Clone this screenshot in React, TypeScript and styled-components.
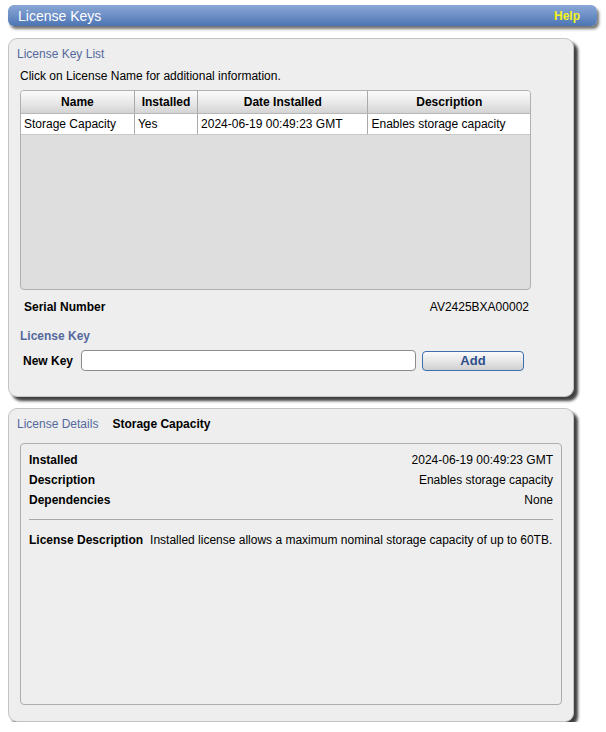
import React from 'react';
import styled, { createGlobalStyle } from 'styled-components';

const Global = createGlobalStyle`
  html, body {
    margin: 0;
    padding: 0;
    background: #ffffff;
    font-family: "Liberation Sans", Arial, sans-serif;
    font-size: 12px;
    color: #000;
  }
`;

const Page = styled.div`
  display: flex;
  flex-direction: column;
  padding: 5px 0 0 8px;
  width: 589px;
`;

const TitleBar = styled.div`
  display: flex;
  align-items: center;
  justify-content: space-between;
  height: 21px;
  padding: 0 17px 0 10px;
  border-radius: 6px;
  background: linear-gradient(to bottom, #8aa8d6 0%, #6d8fc6 50%, #4b74b3 100%);
  box-shadow: 2px 3px 3px rgba(0, 0, 0, 0.55);
  color: #fff;
  font-size: 14px;
`;

const HelpLink = styled.span`
  color: #f2f21a;
  font-size: 12px;
  font-weight: bold;
`;

const Panel = styled.div<{ $height: number; $top: number }>`
  box-sizing: border-box;
  display: flex;
  flex-direction: column;
  width: 566px;
  height: ${p => p.$height}px;
  margin-top: ${p => p.$top}px;
  padding: 7px 0 0 0;
  background: #eeeeee;
  border: 1px solid #c4c4c4;
  border-radius: 9px;
  box-shadow: 4px 4px 3px rgba(0, 0, 0, 0.75);
`;

const PanelTitle = styled.div`
  display: flex;
  gap: 14px;
  padding-left: 8px;
  line-height: 16px;
  color: #55699c;
`;

const Strong = styled.span`
  color: #000;
  font-weight: bold;
`;

const Body = styled.div`
  display: flex;
  flex-direction: column;
  padding-left: 11px;
`;

const Hint = styled.div`
  margin-top: 6px;
  line-height: 16px;
`;

const TableBox = styled.div`
  box-sizing: border-box;
  margin-top: 6px;
  width: 511px;
  height: 200px;
  background: #dedede;
  border: 1px solid #b0b0b0;
  border-radius: 4px;
  overflow: hidden;
`;

const Table = styled.table`
  width: 100%;
  border-collapse: collapse;
  font-size: 12px;
`;

const Th = styled.th<{ $w: number }>`
  width: ${p => p.$w}px;
  height: 22px;
  padding: 0;
  font-weight: bold;
  text-align: center;
  background: linear-gradient(to bottom, #fafafa 0%, #e6e6e6 60%, #d3d3d3 100%);
  border-left: 1px solid #aaaaaa;
  border-bottom: 1px solid #b8b8b8;
  &:first-child { border-left: none; }
`;

const Td = styled.td`
  height: 20px;
  padding: 0 0 0 3px;
  background: #fff;
  border-left: 1px solid #aaaaaa;
  border-bottom: 1px solid #c8c8c8;
  white-space: nowrap;
  &:first-child { border-left: none; }
`;

const InfoRow = styled.div<{ $top: number }>`
  display: flex;
  justify-content: space-between;
  width: 505px;
  margin-top: ${p => p.$top}px;
  padding: 0 2px 0 4px;
  line-height: 16px;
`;

const SubTitle = styled.div`
  margin-top: 13px;
  line-height: 16px;
  color: #55699c;
  font-weight: bold;
`;

const KeyRow = styled.div`
  display: flex;
  align-items: center;
  margin-top: 6px;
  padding-left: 3px;
`;

const Label = styled.span`
  font-weight: bold;
  width: 58px;
`;

const KeyInput = styled.input`
  box-sizing: border-box;
  width: 335px;
  height: 21px;
  border: 1px solid #8c8c8c;
  border-radius: 4px;
  background: #fff;
  padding: 0 4px;
  font-family: inherit;
`;

const AddButton = styled.button`
  box-sizing: border-box;
  width: 102px;
  height: 20px;
  margin-left: 6px;
  border: 1px solid #3e6db0;
  border-radius: 4px;
  background: linear-gradient(to bottom, #fbfbfb 0%, #e4e4e4 55%, #cfcfcf 100%);
  color: #2f4f8c;
  font-family: inherit;
  font-size: 13px;
  font-weight: bold;
  padding: 0;
`;

const DetailBox = styled.div`
  box-sizing: border-box;
  display: flex;
  flex-direction: column;
  width: 542px;
  height: 262px;
  margin: 11px 0 0 11px;
  padding: 6px 8px 0 8px;
  border: 1px solid #acacac;
  border-radius: 4px;
`;

const DetailRow = styled.div`
  display: flex;
  justify-content: space-between;
  line-height: 20px;
`;

const Divider = styled.div`
  height: 1px;
  margin: 9px 0 10px;
  background: #a8a8a8;
`;

const DescRow = styled.div`
  display: flex;
  gap: 7px;
  line-height: 20px;
`;

const columns = [
  { title: 'Name', w: 114 },
  { title: 'Installed', w: 63 },
  { title: 'Date Installed', w: 171 },
  { title: 'Description', w: 163 },
];

const licenses = [
  { name: 'Storage Capacity', installed: 'Yes', date: '2024-06-19 00:49:23 GMT', desc: 'Enables storage capacity' },
];

const details = [
  ['Installed', '2024-06-19 00:49:23 GMT'],
  ['Description', 'Enables storage capacity'],
  ['Dependencies', 'None'],
];

export default function App() {
  return (
    <>
      <Global />
      <Page>
        <TitleBar>
          <span>License Keys</span>
          <HelpLink>Help</HelpLink>
        </TitleBar>

        <Panel $height={359} $top={12}>
          <PanelTitle>License Key List</PanelTitle>
          <Body>
            <Hint>Click on License Name for additional information.</Hint>
            <TableBox>
              <Table>
                <thead>
                  <tr>
                    {columns.map(c => <Th key={c.title} $w={c.w}>{c.title}</Th>)}
                  </tr>
                </thead>
                <tbody>
                  {licenses.map(l => (
                    <tr key={l.name}>
                      <Td>{l.name}</Td>
                      <Td>{l.installed}</Td>
                      <Td>{l.date}</Td>
                      <Td>{l.desc}</Td>
                    </tr>
                  ))}
                </tbody>
              </Table>
            </TableBox>
            <InfoRow $top={9}>
              <Strong>Serial Number</Strong>
              <span>AV2425BXA00002</span>
            </InfoRow>
            <SubTitle>License Key</SubTitle>
            <KeyRow>
              <Label>New Key</Label>
              <KeyInput type="text" />
              <AddButton>Add</AddButton>
            </KeyRow>
          </Body>
        </Panel>

        <Panel $height={314} $top={11}>
          <PanelTitle>
            <span>License Details</span>
            <Strong>Storage Capacity</Strong>
          </PanelTitle>
          <DetailBox>
            {details.map(([k, v]) => (
              <DetailRow key={k}>
                <Strong>{k}</Strong>
                <span>{v}</span>
              </DetailRow>
            ))}
            <Divider />
            <DescRow>
              <Strong>License Description</Strong>
              <span>Installed license allows a maximum nominal storage capacity of up to 60TB.</span>
            </DescRow>
          </DetailBox>
        </Panel>
      </Page>
    </>
  );
}
